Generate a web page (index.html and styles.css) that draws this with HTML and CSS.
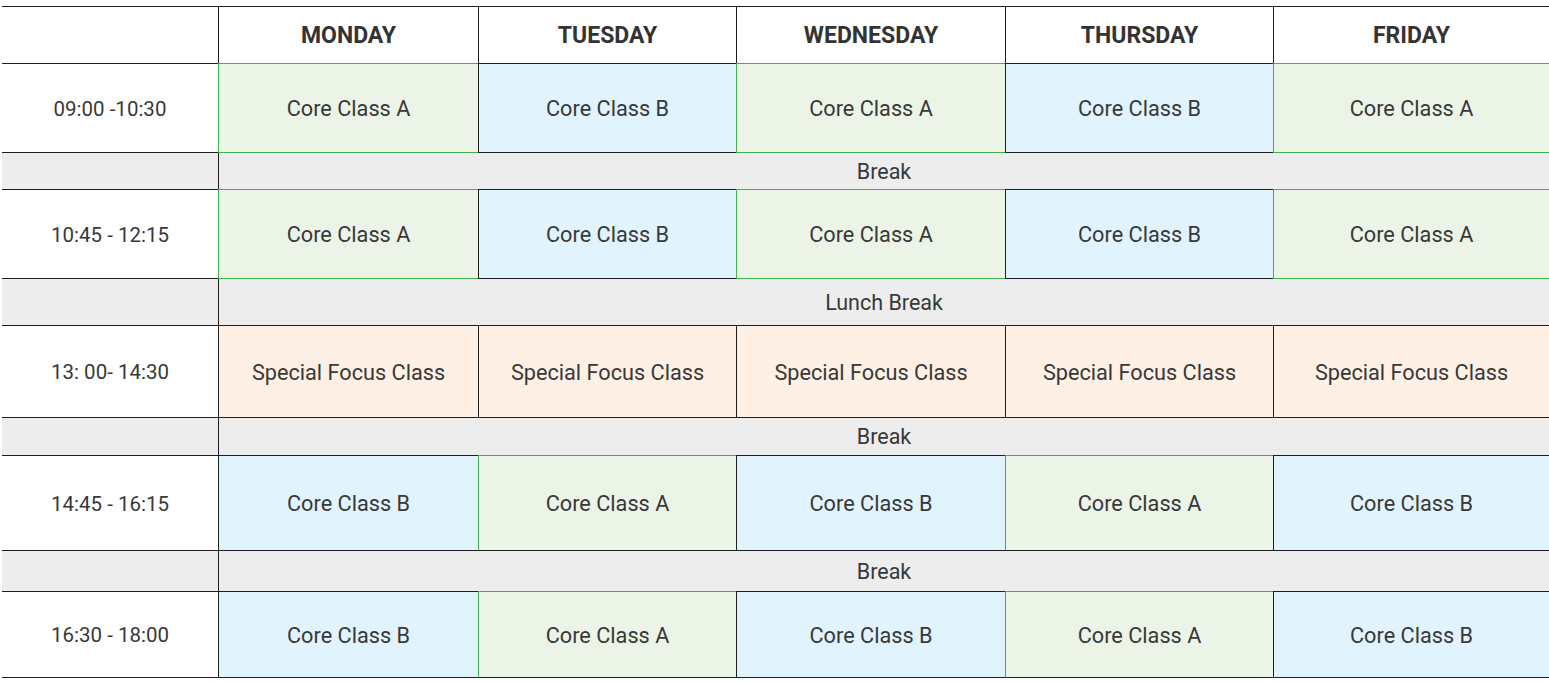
FILE: index.html
```html
<!DOCTYPE html>
<html lang="en">
<head>
<meta charset="utf-8">
<title>Timetable</title>
<link rel="stylesheet" href="styles.css">
</head>
<body>
<div class="wrap">
<table class="tt">
  <colgroup>
    <col class="c-time">
    <col class="c-mon">
    <col class="c-tue">
    <col class="c-wed">
    <col class="c-thu">
    <col class="c-fri">
  </colgroup>
  <thead>
    <tr class="r-head">
      <th class="time"></th>
      <th>MONDAY</th>
      <th>TUESDAY</th>
      <th>WEDNESDAY</th>
      <th>THURSDAY</th>
      <th>FRIDAY</th>
    </tr>
  </thead>
  <tbody>
    <tr class="cls r1">
      <td class="time">09:00 -10:30</td>
      <td class="a">Core Class A</td>
      <td class="b">Core Class B</td>
      <td class="a">Core Class A</td>
      <td class="b">Core Class B</td>
      <td class="a">Core Class A</td>
    </tr>
    <tr class="brk b1">
      <td class="time"></td>
      <td colspan="5">Break</td>
    </tr>
    <tr class="cls r2">
      <td class="time">10:45 - 12:15</td>
      <td class="a">Core Class A</td>
      <td class="b">Core Class B</td>
      <td class="a">Core Class A</td>
      <td class="b">Core Class B</td>
      <td class="a">Core Class A</td>
    </tr>
    <tr class="brk b2">
      <td class="time"></td>
      <td colspan="5">Lunch Break</td>
    </tr>
    <tr class="cls r3">
      <td class="time">13: 00- 14:30</td>
      <td class="s">Special Focus Class</td>
      <td class="s">Special Focus Class</td>
      <td class="s">Special Focus Class</td>
      <td class="s">Special Focus Class</td>
      <td class="s">Special Focus Class</td>
    </tr>
    <tr class="brk b3">
      <td class="time"></td>
      <td colspan="5">Break</td>
    </tr>
    <tr class="cls r4 dark-bottom">
      <td class="time">14:45 - 16:15</td>
      <td class="b">Core Class B</td>
      <td class="a">Core Class A</td>
      <td class="b">Core Class B</td>
      <td class="a">Core Class A</td>
      <td class="b">Core Class B</td>
    </tr>
    <tr class="brk b4">
      <td class="time"></td>
      <td colspan="5">Break</td>
    </tr>
    <tr class="cls r5 dark-bottom">
      <td class="time">16:30 - 18:00</td>
      <td class="b">Core Class B</td>
      <td class="a">Core Class A</td>
      <td class="b">Core Class B</td>
      <td class="a">Core Class A</td>
      <td class="b">Core Class B</td>
    </tr>
  </tbody>
</table>
</div>
</body>
</html>
```

FILE: styles.css
```css
html, body {
  margin: 0;
  padding: 0;
  background: #ffffff;
}

.wrap {
  padding: 6px 0 0 2px;
}

.tt {
  table-layout: fixed;
  border-collapse: separate;
  border-spacing: 0;
  width: 1547px;
  font-family: Roboto, "Liberation Sans", sans-serif;
  color: #383838;
}

.c-time { width: 216px; }
.c-mon { width: 260px; }
.c-tue { width: 258px; }
.c-wed { width: 269px; }
.c-thu { width: 268px; }
.c-fri { width: 276px; }

.tt th,
.tt td {
  box-sizing: border-box;
  padding: 0;
  text-align: center;
  vertical-align: middle;
  border: 0 solid #1e1e1e;
  border-left-width: 1px;
}

.tt .time {
  border-left-width: 0;
}

/* header */
.tt th {
  border-top-width: 1px;
  font-size: 23px;
  font-weight: 700;
  color: #333333;
}
.r-head { height: 57px; }

/* class rows */
.cls td {
  border-top-width: 1px;
  border-bottom-width: 1px;
  font-size: 21.7px;
  padding-top: 1px;
}
.cls td.time {
  font-size: 20.5px;
}
.cls .a {
  background: #ecf4e8;
  border-color: #3db34a;
}
.cls .b { background: #e1f3fd; }
.cls .s { background: #fef0e5; }
.cls.dark-bottom .a { border-bottom-color: #1e1e1e; }

.r1 { height: 90px; }
.r2 { height: 90px; }
.r3 { height: 93px; }
.r4 { height: 96px; }
.r5 { height: 87px; }

/* break rows */
.brk td {
  background: #ededed;
  font-size: 21.5px;
}
.b1 { height: 36px; }
.b2 { height: 46px; }
.b3 { height: 37px; }
.b4 { height: 40px; }
```
